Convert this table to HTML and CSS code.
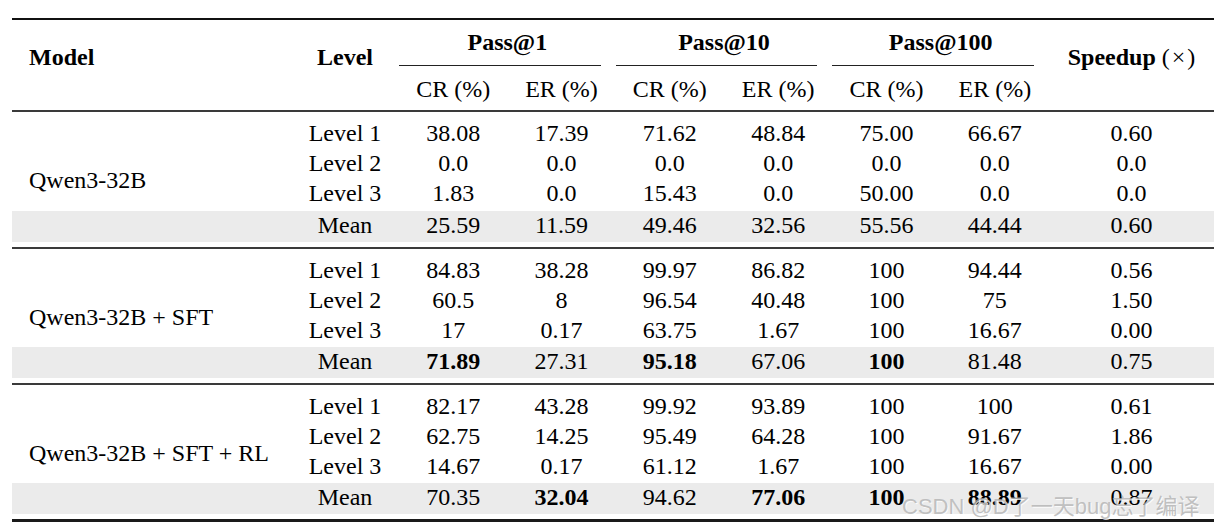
FILE: index.html
```html
<!DOCTYPE html>
<html lang="en">
<head>
<meta charset="utf-8">
<title>Results table</title>
<link rel="stylesheet" href="styles.css">
</head>
<body>
<div class="page">
  <div class="tbl">
    <div class="rule rule-top"></div>
    <div class="head">
      <div class="h-model">Model</div>
      <div class="h-level">Level</div>
      <div class="h-group span-1">Pass@1</div>
      <div class="h-group span-2">Pass@10</div>
      <div class="h-group span-3">Pass@100</div>
      <div class="h-speed">Speedup <span class="reg">(&#8202;×&#8202;)</span></div>
      <div class="h-sub c3">CR (%)</div>
      <div class="h-sub c4">ER (%)</div>
      <div class="h-sub c5">CR (%)</div>
      <div class="h-sub c6">ER (%)</div>
      <div class="h-sub c7">CR (%)</div>
      <div class="h-sub c8">ER (%)</div>
    </div>
    <div class="rule rule-mid"></div>

    <div class="group">
      <div class="model">Qwen3-32B</div>
      <div class="rows">
        <div class="row cols"><span>Level 1</span><span>38.08</span><span>17.39</span><span>71.62</span><span>48.84</span><span>75.00</span><span>66.67</span><span>0.60</span></div>
        <div class="row cols"><span>Level 2</span><span>0.0</span><span>0.0</span><span>0.0</span><span>0.0</span><span>0.0</span><span>0.0</span><span>0.0</span></div>
        <div class="row cols"><span>Level 3</span><span>1.83</span><span>0.0</span><span>15.43</span><span>0.0</span><span>50.00</span><span>0.0</span><span>0.0</span></div>
      </div>
      <div class="row mean cols first"><span>Mean</span><span>25.59</span><span>11.59</span><span>49.46</span><span>32.56</span><span>55.56</span><span>44.44</span><span>0.60</span></div>
    </div>
    <div class="rule rule-mid"></div>

    <div class="group">
      <div class="model">Qwen3-32B + SFT</div>
      <div class="rows">
        <div class="row cols"><span>Level 1</span><span>84.83</span><span>38.28</span><span>99.97</span><span>86.82</span><span>100</span><span>94.44</span><span>0.56</span></div>
        <div class="row cols"><span>Level 2</span><span>60.5</span><span>8</span><span>96.54</span><span>40.48</span><span>100</span><span>75</span><span>1.50</span></div>
        <div class="row cols"><span>Level 3</span><span>17</span><span>0.17</span><span>63.75</span><span>1.67</span><span>100</span><span>16.67</span><span>0.00</span></div>
      </div>
      <div class="row mean cols"><span>Mean</span><span class="b">71.89</span><span>27.31</span><span class="b">95.18</span><span>67.06</span><span class="b">100</span><span>81.48</span><span>0.75</span></div>
    </div>
    <div class="rule rule-mid"></div>

    <div class="group">
      <div class="model">Qwen3-32B + SFT + RL</div>
      <div class="rows">
        <div class="row cols"><span>Level 1</span><span>82.17</span><span>43.28</span><span>99.92</span><span>93.89</span><span>100</span><span>100</span><span>0.61</span></div>
        <div class="row cols"><span>Level 2</span><span>62.75</span><span>14.25</span><span>95.49</span><span>64.28</span><span>100</span><span>91.67</span><span>1.86</span></div>
        <div class="row cols"><span>Level 3</span><span>14.67</span><span>0.17</span><span>61.12</span><span>1.67</span><span>100</span><span>16.67</span><span>0.00</span></div>
      </div>
      <div class="row mean cols"><span>Mean</span><span>70.35</span><span class="b">32.04</span><span>94.62</span><span class="b">77.06</span><span class="b">100</span><span class="b">88.89</span><span>0.87</span></div>
    </div>
    <div class="rule rule-bottom"></div>
  </div>
  <div class="watermark">CSDN @D了一天bug忘了编译</div>
</div>
</body>
</html>
```

FILE: styles.css
```css
html, body {
  margin: 0;
  padding: 0;
  background: #ffffff;
}

.page {
  position: relative;
  width: 1216px;
  height: 529px;
  overflow: hidden;
}

.tbl {
  width: 1202px;
  margin: 18px 0 0 12px;
  font-family: "Liberation Serif", "Times New Roman", serif;
  font-size: 24px;
  color: #000;
}

.rule { width: 100%; }
.rule-top { height: 2px; background: #111; }
.rule-mid { height: 2px; background: #3a3a3a; }
.rule-bottom { height: 3px; background: #1a1a1a; }

/* header */
.head {
  display: grid;
  grid-template-columns: 279px 108px repeat(6, 1fr) 165px;
  grid-template-rows: 46px 44px;
  line-height: 30px;
}

.h-model, .h-level, .h-speed {
  grid-row: 1 / 3;
  font-weight: bold;
  padding-top: 22px;
}
.h-model { grid-column: 1; padding-left: 17px; }
.h-level { grid-column: 2; text-align: center; }
.h-speed { grid-column: 9; text-align: center; }
.h-speed .reg { font-weight: normal; }

.h-group {
  grid-row: 1;
  font-weight: bold;
  text-align: center;
  text-indent: 15px;
  padding-top: 7px;
  margin-right: 15px;
  border-bottom: 1px solid #222;
  box-sizing: border-box;
}
.span-1 { grid-column: 3 / 5; }
.span-2 { grid-column: 5 / 7; }
.span-3 { grid-column: 7 / 9; }

.h-sub {
  grid-row: 2;
  text-align: center;
  padding-top: 8px;
}
.c3 { grid-column: 3; }
.c4 { grid-column: 4; }
.c5 { grid-column: 5; }
.c6 { grid-column: 6; }
.c7 { grid-column: 7; }
.c8 { grid-column: 8; }

/* body groups */
.group {
  display: grid;
  grid-template-columns: 279px 1fr;
  grid-template-rows: auto auto;
  row-gap: 2px;
  padding: 6px 0 5px;
}

.model {
  grid-column: 1;
  grid-row: 1 / 3;
  align-self: center;
  padding-left: 17px;
  line-height: 30px;
  position: relative;
  z-index: 1;
}

.rows {
  grid-column: 2;
  grid-row: 1;
}

.cols {
  display: grid;
  grid-template-columns: 108px repeat(6, 1fr) 165px;
}

.row {
  height: 30px;
  line-height: 30px;
  text-align: center;
  white-space: nowrap;
}

.row.mean {
  grid-column: 1 / 3;
  grid-row: 2;
  height: 31px;
  line-height: 28px;
  padding-left: 279px;
  background: #ebebeb;
}
.row.mean.first { margin-top: 1px; }

.b { font-weight: bold; }

.watermark {
  position: absolute;
  left: 902px;
  top: 496px;
  font-family: "Liberation Sans", "Noto Sans CJK SC", sans-serif;
  font-size: 22px;
  line-height: 22px;
  color: rgba(175, 175, 175, 0.75);
  text-shadow: 1px 1px 0 rgba(255, 255, 255, 0.8);
  white-space: nowrap;
}
```
